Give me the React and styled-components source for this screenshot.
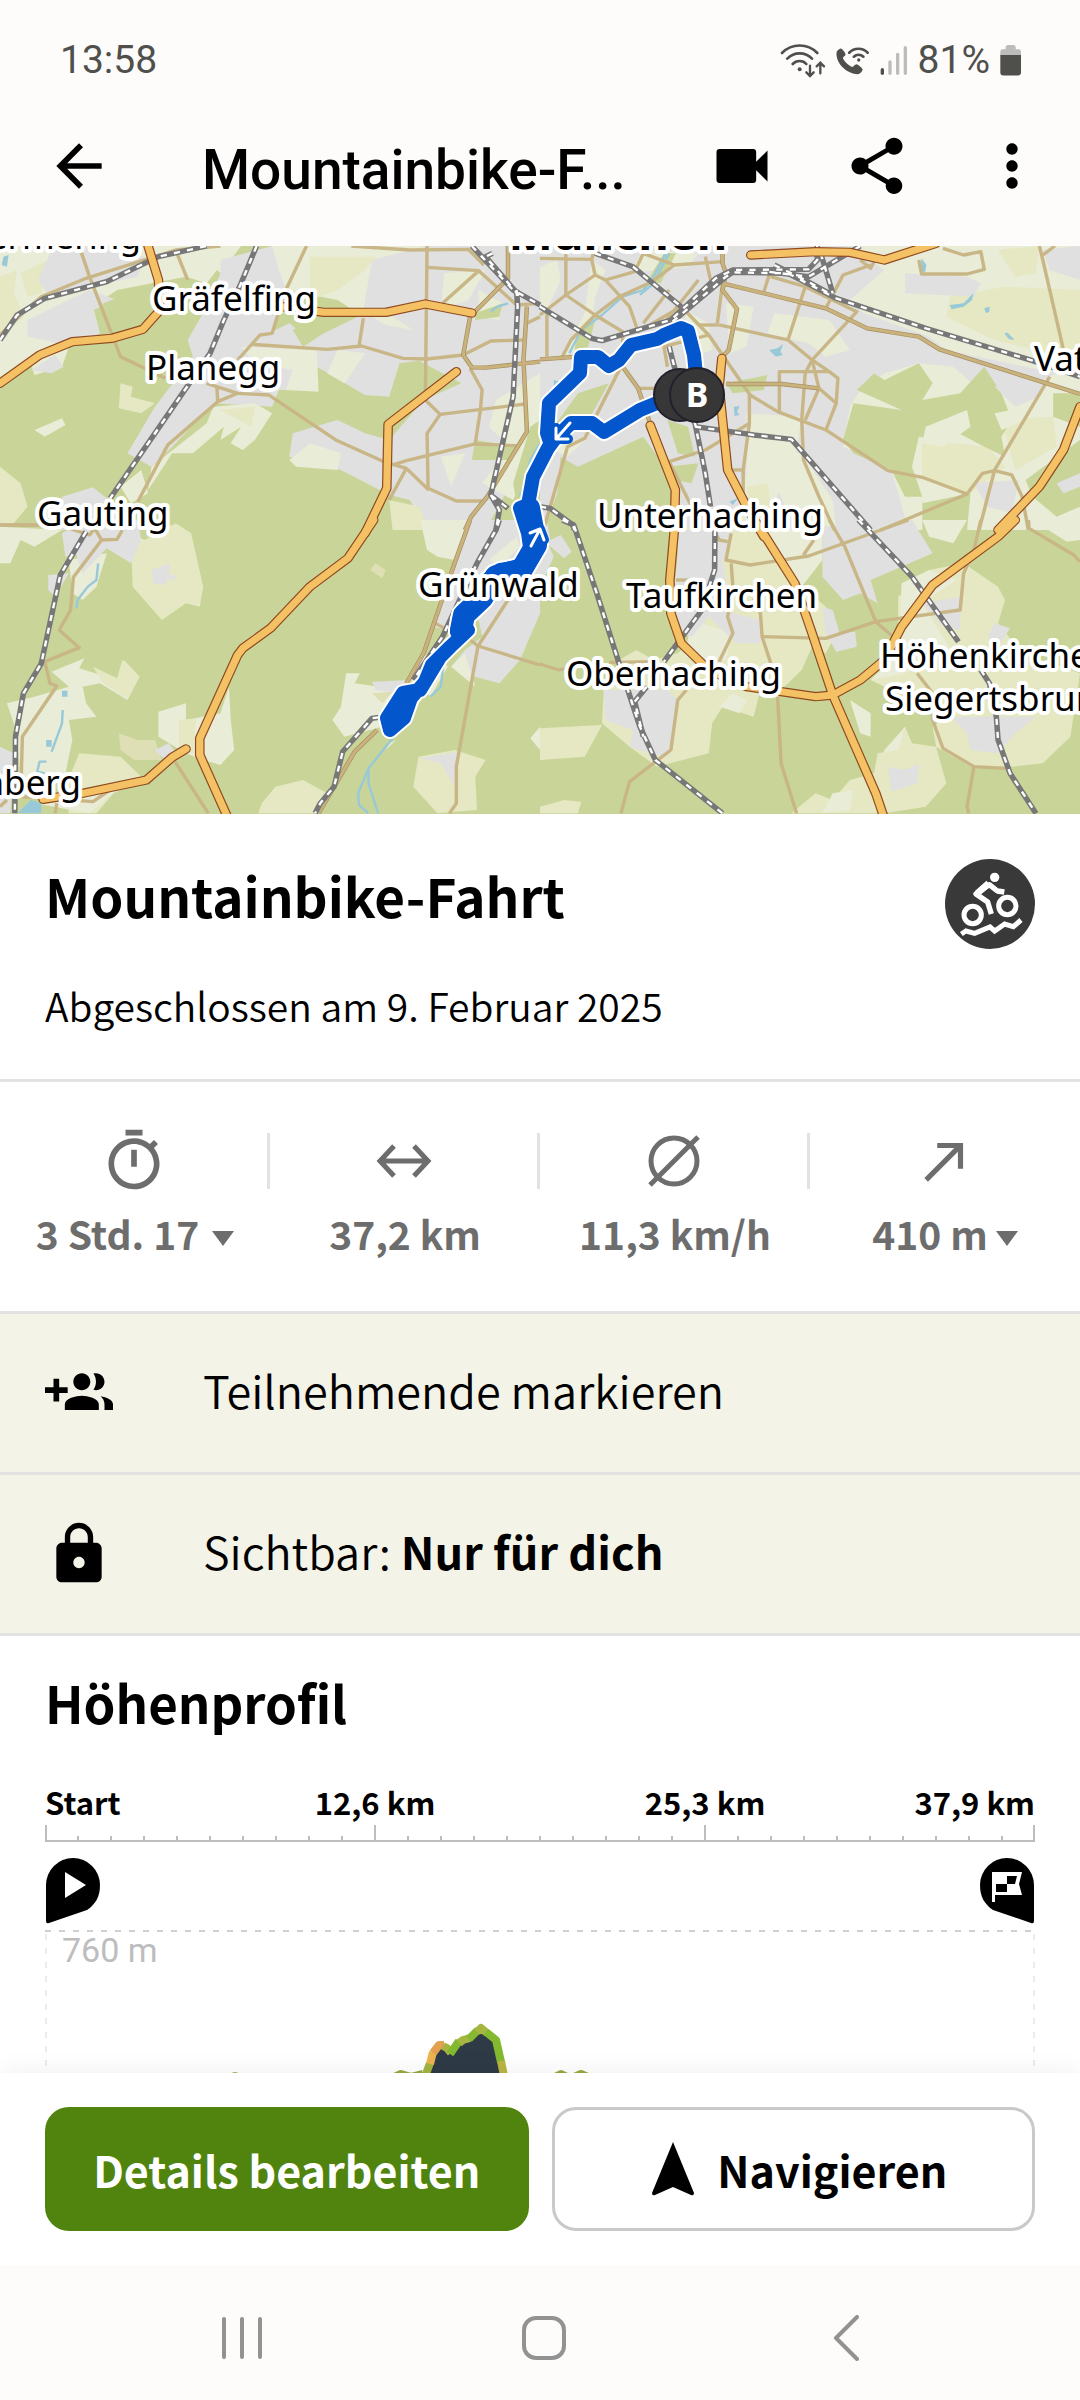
import React from "react";
import styled, { createGlobalStyle } from "styled-components";
import {
  MdArrowBack,
  MdCallMade,
  MdLock,
  MdMoreVert,
  MdOutlineTimer,
  MdShare,
  MdVideocam,
} from "react-icons/md";

const GlobalStyle = createGlobalStyle`
  * {
    box-sizing: border-box;
  }

  body {
    margin: 0;
    background: #ffffff;
    color: #000000;
    font-family: "Noto Sans CJK SC", "Noto Sans", sans-serif;
  }

  button {
    border: 0;
    padding: 0;
    background: none;
    color: inherit;
    font: inherit;
    cursor: pointer;
  }

  h1, h2, p {
    margin: 0;
  }

  svg {
    display: block;
    flex-shrink: 0;
  }
`;

const Screen = styled.div`
  display: flex;
  flex-direction: column;
  height: 100vh;
`;

const StatusBar = styled.div`
  display: flex;
  align-items: center;
  justify-content: space-between;
  height: 86px;
  padding: 34px 58px 0 60px;
  background: #fdfcfa;
  color: #4f4f4c;
  font-family: Roboto, sans-serif;
  font-size: 39px;
  line-height: 52px;
`;

const StatusGroup = styled.div`
  display: flex;
  align-items: center;
  gap: 9px;
`;

const AppBar = styled.header`
  display: flex;
  align-items: center;
  flex-shrink: 0;
  height: 160px;
  padding: 0 34px 0 45px;
  background: #fdfcfa;
`;

const AppTitle = styled.div`
  flex: 1;
  padding: 8px 0 0 89px;
  font-family: Roboto, sans-serif;
  font-size: 55px;
  font-weight: 500;
  line-height: 64px;
  white-space: nowrap;
`;

const AppActions = styled.div`
  display: flex;
  gap: 67px;
`;

const Content = styled.main`
  flex: 1;
  min-height: 0;
  overflow: hidden;
`;

const MapView = styled.svg`
  width: 100%;
  height: 568px;
`;

const Summary = styled.section`
  padding: 45px 45px 50px;
  border-bottom: 3px solid #e2e2e2;
`;

const SummaryHead = styled.div`
  display: flex;
  align-items: flex-start;
  justify-content: space-between;
`;

const Title = styled.h1`
  font-size: 53px;
  font-weight: 700;
  line-height: 72px;
`;

const Subtitle = styled.p`
  margin-top: 32px;
  font-size: 39px;
  font-weight: 350;
  line-height: 48px;
`;

const Stats = styled.section`
  display: grid;
  grid-template-columns: repeat(4, 1fr);
  padding: 51px 0 54px;
  border-bottom: 3px solid #e2e2e2;
  color: #6d6d6d;
`;

const Stat = styled.div`
  display: flex;
  flex-direction: column;
  align-items: center;
  gap: 20px;
`;

const StatIcon = styled.div`
  display: flex;
  align-items: center;
  justify-content: center;
  width: 100%;
  height: 56px;
  border-right: ${(props) => (props.$last ? "0" : "3px solid #e2e2e2")};
`;

const StatValue = styled.div`
  display: flex;
  align-items: center;
  gap: ${(props) => props.$gap || 0}px;
  font-size: 39px;
  font-weight: 700;
  line-height: 48px;
  white-space: nowrap;

  svg {
    margin-top: 10px;
  }
`;

const OptionRow = styled.button`
  display: flex;
  align-items: center;
  gap: 90px;
  width: 100%;
  height: 161px;
  text-align: left;

  && {
    padding: 0 45px;
    border-bottom: 3px solid #e2e2e2;
    background: #f4f3e8;
  }
`;

const OptionLabel = styled.span`
  padding-bottom: 6px;
  font-size: 45px;
  font-weight: 350;
  line-height: 60px;

  strong {
    font-weight: 700;
  }
`;

const Profile = styled.section`
  padding: 34px 45px 0;
`;

const ProfileTitle = styled.h2`
  font-size: 51px;
  font-weight: 700;
  line-height: 64px;
`;

const Scale = styled.div`
  display: grid;
  grid-template-columns: 1fr 2fr 2fr 1fr;
  margin-top: 48px;
  font-size: 31px;
  font-weight: 700;
  line-height: 40px;
  text-align: center;
  white-space: nowrap;

  & > :first-child {
    text-align: left;
  }

  & > :last-child {
    text-align: right;
  }
`;

const Ruler = styled.svg`
  width: 100%;
  height: 17px;
  margin-top: 3px;
`;

const Pins = styled.div`
  display: flex;
  justify-content: space-between;
  margin-top: 16px;
  padding: 0 1px;
`;

const Chart = styled.div`
  position: relative;
  margin-top: 6px;
`;

const ChartLabel = styled.span`
  position: absolute;
  top: 0;
  left: 17px;
  color: #bdbdbd;
  font-family: Roboto, sans-serif;
  font-size: 34px;
  line-height: 40px;
`;

const Actions = styled.footer`
  position: relative;
  display: grid;
  grid-template-columns: 1fr 1fr;
  flex-shrink: 0;
  gap: 23px;
  padding: 34px 45px;
  background: #ffffff;
  box-shadow: 0 -2px 24px rgba(0, 0, 0, 0.06);
`;

const ActionButton = styled.button`
  display: flex;
  align-items: center;
  justify-content: center;
  gap: 22px;
  height: 124px;
  border-radius: 24px;
  font-size: 43px;
  font-weight: 700;
  line-height: 60px;

  && {
    border: ${(props) => (props.$primary ? "0" : "3px solid #c9c9c9")};
    background: ${(props) => (props.$primary ? "#50840e" : "#ffffff")};
    color: ${(props) => (props.$primary ? "#ffffff" : "#000000")};
  }
`;

const SystemNav = styled.nav`
  position: relative;
  display: flex;
  justify-content: center;
  flex-shrink: 0;
  height: 135px;
  padding: 10px 0 0 8px;
  background: #fdfcfa;
`;

const NavButton = styled.button`
  display: flex;
  align-items: center;
  justify-content: center;
  width: 302px;
`;

// Map data is stored in four sheets, each drawn in its own 1568 unit wide grid.
const sheets = [
  {
    x: 0,
    y: 240,
    land: [
      ["light", "M0 18H700L640 100L630 90L600 130L540 110L340 150L270 200L290 280L200 320L180 380L100 405L90 370L0 440Z"],
      ["field", "M0 110L50 90L40 160L70 230L0 290ZM60 100L140 60L120 160L80 170Z"],
      ["urban", "M150 30L240 18L420 50L400 110L260 140L140 165L110 120ZM80 240L260 150L340 180L270 210L290 280L200 320L130 300L80 290Z"],
      ["urban", "M640 60L790 18L880 60L830 180L790 280L690 360L560 350L545 300L600 200L640 100Z"],
      ["light", "M790 18H1568V200L1100 260L980 180L830 150L810 90Z"],
      ["field", "M900 50L1090 50L1060 90L980 150L900 180Z"],
      ["urban", "M560 350L760 290L840 250L900 300L1060 220L1170 270L1230 360L1160 370L1130 470L1060 465L920 380L920 450L810 450L790 500L620 490L500 620L440 680L370 640L450 500Z"],
      ["light", "M700 320L920 330L925 455L830 450L850 390L740 370ZM980 330L1060 340L1000 430L950 400Z"],
      ["urban", "M1080 60L1240 18H1568V650L1500 700L1410 870H1240L1190 780L1130 765L990 690L840 650L850 580L980 540L1060 580L1130 600L1230 480L1340 430L1230 370L1050 240Z"],
      ["light", "M1290 100L1410 90L1360 180L1280 210ZM1080 230L1140 230L1200 270L1120 255ZM1390 150L1460 190L1450 240L1390 230ZM1440 480L1568 400V600L1490 780L1400 730L1480 620L1420 560ZM840 660L900 610L990 640L980 690L860 680ZM1280 650L1350 640L1310 740Z"],
      ["wood", "M1380 220L1460 190L1450 230L1380 240ZM1380 600L1500 620L1480 660L1370 660ZM1540 560L1568 540V640L1500 790L1490 730ZM850 270L910 230L940 280L880 320ZM300 190L400 150L460 220L440 260L330 280L290 220Z"],
      ["light", "M620 500L740 490L790 520L740 600L705 630L670 610L700 560L640 600L650 560L560 640L500 640L430 750L440 680L600 550Z"],
      ["field", "M350 430L385 440L380 470L450 490L410 520L345 505ZM0 680L60 730L80 800L40 850L0 860ZM640 510L740 500L730 560ZM1130 780L1220 800L1240 870H1140Z"],
      ["light", "M100 570L180 535L190 555L130 590ZM440 870L480 850L520 870ZM350 740L410 690L430 760L380 790Z"],
      ["urban", "M180 770L270 742L340 800L330 870H170ZM90 390L160 345L185 380L150 400Z"],
    ],
    water: ["M10 50L25 45L20 80L5 75Z"],
    rivers: ["M1568 610L1540 660L1520 740L1510 770", "M1425 215L1445 200L1475 190"],
    roads: [
      "M0 285L70 215L120 170L250 115L510 30L640 18",
      "M230 18L260 110L350 350L480 415",
      "M510 30L545 120",
      "M890 18L830 150L790 280L755 285L690 360",
      "M730 313L950 328L1050 318L1170 355L1240 357L1345 345L1425 303L1525 300",
      "M1055 235L1043 315",
      "M1240 18L1235 480L1278 523L1525 492",
      "M1240 82L1390 92L1285 190",
      "M1390 92L1500 195L1568 190",
      "M1020 18L1190 30L1360 28L1405 75",
      "M1365 385L1400 450L1395 510L1380 610",
      "M1278 523L1240 580L1243 745L1325 783L1400 783",
      "M1140 675L1180 662L1380 612L1500 617",
      "M1245 750L1180 685L1115 665L975 600L780 465L690 460L600 430",
      "M630 440L632 485L690 460",
      "M632 485L487 615L400 785",
      "M1180 685L1130 780",
      "M0 855H110",
      "M1530 250L1568 230",
    ],
    mainRoads: [
      "M1370 225L1475 115V18",
      "M1365 230L1345 345L1370 382L1410 383L1568 365",
      "M1530 200L1520 360L1530 575L1415 770L1368 830L1350 870",
    ],
    rails: [
      "M745 18L700 130L650 240L610 340L540 445L320 775",
      "M0 300L50 225L130 175L310 125L460 50L600 18",
      "M1370 18L1490 150L1568 195",
      "M1430 40L1410 50L1510 170",
      "M1500 150L1503 200L1490 470L1425 765L1475 805",
      "M1425 765L1450 810L1440 870",
    ],
    motorways: [
      "M430 18L460 120L465 210L415 268L325 295L210 305L115 345L0 430",
      "M820 200L940 217H1120L1235 192L1370 219",
      "M1325 395L1127 553L1123 745L1060 880",
    ],
  },
  {
    x: 540,
    y: 240,
    land: [
      ["light", "M0 18H1568V870H0Z"],
      ["urban", "M0 18H900L1000 90L900 180L940 220L1130 290L1180 330L1500 400L1440 430L1300 470L1200 380L1100 370L1000 400L930 450L900 500L880 620L1020 690L1060 830L1000 870H0Z"],
      ["light", "M0 80L50 60L60 120L20 210L0 200ZM150 60L190 90L160 170L150 260L110 330L60 350L130 220ZM300 30L460 40L430 80L260 100ZM540 190L620 200L600 320L550 340ZM420 210L490 250L500 330L440 350ZM680 220L840 240L900 330L830 350L780 310L660 280ZM600 520L760 530L740 660L640 870H560L600 700ZM640 620L760 640L850 780L860 870H740ZM0 610L130 600L80 650Z"],
      ["field", "M1190 170L1350 140L1568 150V370L1440 330L1320 300L1180 230ZM1110 600L1300 620L1350 680L1250 760L1110 720ZM1340 540L1490 530L1500 620L1380 690ZM1330 30L1450 18L1440 100L1380 110ZM600 740L660 730L680 860H620Z"],
      ["wood", "M60 650L110 680L300 590L370 690L400 800L430 870H10L50 760Z"],
      ["wood", "M920 450L970 400L1000 420L1100 370L1140 430L1110 480L1220 460L1290 380L1340 460L1370 540L1340 590L1350 650L1290 620L1180 560L1160 600L1100 590L1080 680L1110 770L1060 770L1020 690L910 640L880 600L910 490L1050 510Z"],
      ["wood", "M1490 460L1568 460V560L1490 530ZM1410 720L1568 600V800L1500 830L1430 770ZM360 40L395 40L350 130L310 125ZM540 430L660 405L650 450L560 460ZM40 560L110 460L200 430L130 560L50 600ZM370 540L430 560L450 650L400 640ZM370 680L460 670L440 730L390 720ZM1110 790L1250 760L1240 870H1110ZM110 270L160 240L140 320L100 330Z"],
      ["light", "M1120 560L1240 510L1250 560L1170 620L1110 610ZM1320 520L1420 500L1410 540L1340 570Z"],
      ["urban", "M1060 100L1240 110L1280 130L1260 170L1060 160ZM1460 30L1568 18V120L1480 90ZM1260 730L1390 720L1370 820L1300 800ZM1320 440L1480 420L1450 470L1380 500ZM1500 730L1568 700V740L1520 760Z"],
    ],
    water: [
      "M1190 195L1230 190L1258 160L1255 180L1230 200L1195 208Z",
      "M1290 205L1305 200L1305 215L1295 220Z",
      "M1348 280L1358 278L1378 300L1362 298Z",
      "M1108 55L1122 75L1118 98L1106 90Z",
      "M665 330L690 325L706 312L698 335L705 345L685 350Z",
      "M563 500L580 498L572 515L580 525L565 528Z",
      "M40 420L60 425L55 460L40 450Z",
      "M550 785L575 775L560 795Z",
    ],
    rivers: ["M365 40L330 110L300 150L240 170L180 225L120 270L85 340", "M375 40L330 130L290 165"],
    roads: [
      "M0 55L150 58L160 105L75 165V40",
      "M150 58L160 18",
      "M0 225L75 165L160 225L240 275V380",
      "M20 210V350",
      "M160 105L190 120L260 200L285 275L410 200",
      "M190 120L275 95L300 40L390 75L530 65",
      "M390 75L325 125L230 170L160 225L90 300L60 360",
      "M325 125L410 200L490 285L610 465L690 515L830 570L1010 692L1110 712L1240 762L990 870",
      "M520 255L720 300L790 360L840 395L865 415L860 490L830 570",
      "M515 250L530 130L495 120L480 50",
      "M670 110L770 140L920 215L790 360L770 400L760 540L765 660L810 770L855 870",
      "M670 90L650 155",
      "M770 140L720 300",
      "M830 205L880 105L960 75",
      "M695 515V395H840",
      "M770 540L810 445L860 490",
      "M790 360L810 445",
      "M608 465V550L590 690V780",
      "M375 665L480 630L608 550",
      "M375 665L440 800",
      "M375 150L300 250",
      "M545 690H590",
      "M285 445H340",
      "M240 370L130 595L80 620L10 870",
      "M1100 60L1108 102H1240L1290 88L1280 35L1230 45L1170 25",
      "M1450 18L1460 60L1520 330",
      "M1480 410L1320 690L1275 870",
      "M1240 762L1285 700L1320 692L1370 705L1400 770L1418 870",
      "M490 285L360 320L370 380",
      "M460 255H520",
      "M460 120L360 250",
      "M930 60L960 85L975 55",
      "M1460 45L1495 18",
    ],
    mainRoads: [
      "M530 18V70L540 100L530 150L572 207L548 330L530 350",
      "M530 130L830 205L950 265L1100 290L1160 328L1568 462",
      "M240 380L285 445L320 550",
      "M0 358L110 350",
      "M540 432H700L810 445",
    ],
    rails: [
      "M160 40L270 80L410 200",
      "M0 200L150 295L180 302L380 240L510 115L560 90L780 88L805 60V18",
      "M385 245L540 110L560 97L720 100L860 175L1120 265L1430 362L1568 410",
      "M680 75L760 115L840 160",
      "M815 40L850 160",
      "M930 18L780 110L660 95",
      "M375 320L390 380L450 550L480 700L495 800",
      "M450 560L620 585L730 598L960 870",
      "M0 800L30 805L95 855L100 870",
    ],
    motorways: [
      "M612 45L800 35L900 37L1000 60L1150 10",
      "M528 355L520 440L545 690L600 800L650 890",
      "M320 556L393 750L390 870",
      "M1568 500L1520 630L1450 740L1330 870",
    ],
  },
  {
    x: 0,
    y: 520,
    land: [
      ["field", "M380 40L420 60L510 10L555 40L590 200L580 260L540 250L470 300L385 200Z"],
      ["urban", "M440 150L495 130L490 160L520 175L485 180L480 195L445 190Z"],
      ["light", "M0 20L180 30L100 80L60 60L30 130H0ZM200 120L310 100L280 200L240 240L210 220Z"],
      ["urban", "M180 40L250 0H400L410 60L380 130L310 85L240 160L220 100L190 110ZM140 165L200 160L160 230L140 210Z"],
      ["light", "M150 455L245 415L230 445L340 480L360 420L405 470L370 540L290 490L240 500L250 550L280 590L200 600L210 660L190 760L60 800L50 640L20 550L100 530L200 500Z"],
      ["field", "M270 440L340 475L355 420L405 470L370 535L300 490ZM230 700L350 710L420 780L330 820L280 880H200L190 800Z"],
      ["tan", "M345 640L400 660L450 660L470 720L390 720L350 690Z"],
      ["light", "M460 575L540 550V600L640 580L665 500L670 600L680 690L640 735L590 720L540 700L460 650ZM100 850L260 820L340 810L260 880Z"],
      ["field", "M520 600L570 595L560 700L520 690ZM760 850L800 800L880 780L950 820L930 880H750Z"],
      ["urban", "M0 680L40 700L30 880H0ZM450 690L490 670L520 710L480 720Z"],
      ["light", "M1005 460L1045 460L1030 490L1100 500L1170 500L1110 620L1000 650L965 600L990 560Z"],
      ["urban", "M1080 485L1190 480L1160 520L1090 510Z"],
      ["tan", "M1080 520L1140 515L1110 550ZM1075 150L1090 130L1120 150L1110 175Z"],
      ["light", "M1220 0H1360L1320 120L1270 110L1240 90Z"],
      ["urban", "M1355 0H1568V280L1510 420L1450 490L1380 470L1310 440L1350 390L1400 350L1390 300L1300 330L1255 320L1290 200L1320 130Z"],
      ["light", "M1420 120L1500 50L1510 80L1450 140ZM1310 440L1350 400L1380 500ZM1215 420L1290 370L1190 500ZM1285 420L1300 440L1250 530L1240 520Z"],
      ["field", "M1215 710L1320 690L1410 720L1380 770L1385 870L1270 880L1200 800Z"],
      ["urban", "M1220 715L1330 695L1320 800L1280 730Z"],
      ["light", "M1130 670L1150 660L1120 690ZM1540 655L1568 620V690Z"],
    ],
    water: ["M55 875L90 840L120 850V880H55Z", "M180 512H196V530H180ZM134 660H150V680H134Z"],
    rivers: [
      "M1290 410L1280 500L1250 530",
      "M1140 655L1070 745L1040 820L1042 855L1070 880",
      "M1070 745V790L1098 880",
      "M285 130L280 180L255 200L225 240L222 265",
      "M182 570L180 610L150 695",
      "M135 725H115L108 755L130 760",
    ],
    roads: [
      "M0 15H170L260 45L275 25L295 60L340 58L355 30",
      "M295 60L213 172L205 270L172 330L230 383L130 425L145 490L165 498L65 650L60 830L270 845L320 810",
      "M505 720L605 880",
      "M165 850L160 880",
      "M1475 240L1388 378L1568 435",
      "M1365 360L1388 378L1325 740V850L1305 880",
      "M1255 305L1300 330",
      "M0 860L20 840",
    ],
    mainRoads: ["M1365 0L1320 130L1230 400L1180 490", "M1095 630L1030 695L925 880"],
    rails: [
      "M250 35L175 165L120 430L68 520L45 650L43 880",
      "M1450 0L1440 30L1385 130L1330 250L1285 350L1200 480",
      "M1100 592L1080 595L995 695L970 800L930 850L915 880",
    ],
    motorways: [
      "M1085 0L1010 115L900 200L785 325L705 385L690 405L580 655V705L660 890",
      "M540 687L500 712L425 780L240 820L125 838",
    ],
  },
  {
    x: 540,
    y: 520,
    land: [
      ["urban", "M0 0H20L30 60L60 45L92 95L70 115L25 75L40 110L0 200Z"],
      ["field", "M430 20H640L740 180L830 260L860 340L830 400L790 380L760 450L710 500L640 510L620 590L530 560L500 610L490 700L340 740L260 680L180 610L185 510L230 420L280 390L330 420L400 400L480 330L430 280L400 190V40Z"],
      ["light", "M640 30H820V120L760 200L700 110ZM440 300L560 340L540 420L420 410ZM520 560L560 520L600 540L580 580Z"],
      ["urban", "M400 30H560L530 130L560 280L640 300V370H570L490 290L440 350L410 340L385 260L400 100Z"],
      ["urban", "M820 20L1080 0L1140 100L960 180L980 250L930 220L880 240L820 170ZM820 260L850 270L870 340L915 335L920 380L860 395L830 340Z"],
      ["urban", "M185 510H370L400 540L370 710L320 700L260 680L270 630L190 600Z"],
      ["field", "M0 625L180 615L130 710L0 720ZM0 860L70 840L120 845L110 880H0Z"],
      ["light", "M1110 0H1240L1200 70L1130 50ZM1430 0H1568V60L1530 65ZM900 540L960 580V650L930 640Z"],
      ["field", "M1130 150L1230 130L1330 200L1350 240L1330 310L1400 400L1568 460L1540 650L1460 730L1370 740L1250 740L1150 680L1140 620L1180 590L1000 500L960 480L1040 400L1040 230Z"],
      ["light", "M1050 190L1130 150L1210 180L1110 250L1200 400L1060 460L960 480L1040 400ZM1060 620L1080 680L1050 740L980 760L1000 690Z"],
      ["urban", "M1110 250L1220 230V330L1170 320ZM1320 310L1365 325L1330 380L1300 350ZM1190 590H1440L1380 640L1330 700L1250 690L1240 640Z"],
      ["field", "M980 700L1040 690L1060 620L1080 670L1150 680L1180 790L1120 860L1000 880H730L800 820L850 840L900 780L970 760Z"],
      ["light", "M850 820L910 810L900 870L820 880Z"],
      ["urban", "M1010 740L1060 750L1100 730L1095 790L1020 815Z"],
      ["wood", "M860 260L940 230L950 290L870 330Z"],
    ],
    water: [],
    rivers: [],
    roads: [
      "M0 432L55 450L110 440",
      "M200 427L340 425",
      "M425 510L400 540L380 690L260 785L235 880",
      "M520 425L560 340L545 290L560 200L555 130",
      "M555 40L540 120L610 135L780 108L1070 0",
      "M765 105L795 60",
      "M395 180H460",
      "M620 235L640 280L645 350L670 430",
      "M645 350L830 355L975 305L1220 270L1230 160L1260 90L1280 0",
      "M840 0L885 80L975 305L1030 355",
      "M690 530L700 730L745 880",
      "M1095 460L1140 520V600L1170 685L1260 740L1355 745L1375 785L1440 880",
      "M1260 740L1240 860L1245 880",
      "M1418 0L1420 25L1550 105L1568 125",
      "M500 20L520 60L545 65",
    ],
    mainRoads: [],
    rails: [
      "M65 0L98 15L165 220L228 425L290 620L335 720L530 880",
      "M508 30L507 150L470 270L360 425",
      "M310 500L275 545L300 650",
      "M925 0L1080 170L1215 365",
      "M1280 450L1305 490L1325 590L1330 660L1365 760L1440 880",
    ],
    motorways: [
      "M390 -10V30L377 180L380 280L410 370L490 450L600 500L700 515L800 530L850 525L930 480L1000 420L1050 320L1140 195L1330 50L1380 0",
      "M630 10L740 190L790 340L850 525L975 820L998 890",
    ],
  },
];

const landColors = {
  light: "#e9ecd6",
  field: "#e5e8c2",
  tan: "#dfdfb5",
  urban: "#e0e0e0",
  wood: "#c9d598",
};

const places = [
  ["Gräfelfing", 152, 311],
  ["Planegg", 146, 380],
  ["Gauting", 37, 526],
  ["Vaterstetten", 1034, 371],
  ["Unterhaching", 597, 528],
  ["Grünwald", 418, 597],
  ["Taufkirchen", 626, 608],
  ["Oberhaching", 566, 686],
  ["Höhenkirchen-", 880, 668],
  ["Siegertsbrunn", 885, 711],
];

const route =
  "M697 385L694 355L688 331L681 328L664 335L657 339L631 345L619 360L609 366L598 357H581L580 373L549 403L547 433L550 442" +
  "M665 401L657 403L640 410L604 432L592 423H571L554 440L548 448L533 477L528 505L520 508L528 533L530 547L522 567L500 570L487 580" +
  "L482 600L460 617L457 632L468 630L450 647L440 657L420 690L403 693L387 718L390 730L404 718L411 698L425 682L432 665L450 647";

// Stretch that was ridden in both directions.
const doubledRoute = "M529 508L536 545L522 569L496 576L482 598L464 615L461 630";

const SheetLayer = ({ sheet, name, ...rest }) => (
  <g
    transform={`translate(${sheet.x} ${sheet.y}) scale(0.3444 0.3333)`}
    fill="none"
    strokeLinejoin="round"
    {...rest}
  >
    {sheet[name].map((d) => (
      <path key={d} d={d} />
    ))}
  </g>
);

const lineStyles = [
  ["rivers", { stroke: "#98c9d8", strokeWidth: 7 }],
  ["roads", { stroke: "#c9b686", strokeWidth: 10 }],
  ["mainRoads", { stroke: "#a58f63", strokeWidth: 13 }],
  ["mainRoads", { stroke: "#c9b27c", strokeWidth: 9 }],
  ["rails", { stroke: "#777777", strokeWidth: 16 }],
  ["rails", { stroke: "#ffffff", strokeWidth: 7, strokeDasharray: "18 21" }],
  ["motorways", { stroke: "#8f4a20", strokeWidth: 28, strokeLinecap: "round" }],
  ["motorways", { stroke: "#f4c265", strokeWidth: 21, strokeLinecap: "round" }],
];

const RouteMap = () => (
  <MapView viewBox="0 246 1080 568" preserveAspectRatio="xMidYMid slice">
    <rect y="240" width="1080" height="580" fill="#c9d598" />
    {sheets.map((sheet) => (
      <g
        key={`${sheet.x}-${sheet.y}`}
        transform={`translate(${sheet.x} ${sheet.y}) scale(0.3444 0.3333)`}
      >
        {sheet.land.map(([kind, d]) => (
          <path key={d} d={d} fill={landColors[kind]} />
        ))}
        {sheet.water.map((d) => (
          <path key={d} d={d} fill="#98c9d8" />
        ))}
      </g>
    ))}
    {lineStyles.map(([name, style], i) =>
      sheets.map((sheet) => (
        <SheetLayer
          key={`${i}-${sheet.x}-${sheet.y}`}
          sheet={sheet}
          name={name}
          {...style}
        />
      ))
    )}
    <g fill="none" strokeLinejoin="round" strokeLinecap="round">
      <path d={route} stroke="#ffffff" strokeWidth="18" />
      <path d={doubledRoute} stroke="#ffffff" strokeWidth="26" />
      <path d={route} stroke="#0356cb" strokeWidth="14" />
      <path d={doubledRoute} stroke="#0356cb" strokeWidth="22" />
    </g>
    <g fill="none" strokeLinecap="round" strokeLinejoin="round">
      <path d="M570 423L556 439M556 428V439H568" stroke="#0356cb" strokeWidth="10" />
      <path d="M570 423L556 439M556 428V439H568" stroke="#ffffff" strokeWidth="3" />
      <path d="M531 546L540 529M530 533L540 529L544 540" stroke="#0356cb" strokeWidth="10" />
      <path d="M531 546L540 529M530 533L540 529L544 540" stroke="#ffffff" strokeWidth="3" />
    </g>
    <g fill="#373737" stroke="#22202c" strokeWidth="2">
      <circle cx="680" cy="395" r="26" />
      <circle cx="697" cy="395" r="27" />
    </g>
    <g
      fontFamily='"Noto Sans", sans-serif'
      stroke="#ffffff"
      strokeWidth="8"
      strokeLinejoin="round"
      paintOrder="stroke"
    >
      <text x="697" y="407" fontSize="34" fontWeight="700" textAnchor="middle" fill="#ffffff" strokeWidth="0">
        B
      </text>
      <text x="141" y="249" fontSize="35" textAnchor="end">
        Germering
      </text>
      <text x="618" y="250" fontSize="47" fontWeight="700" textAnchor="middle">
        München
      </text>
      <text x="81" y="795" fontSize="35" textAnchor="end">
        Starnberg
      </text>
      {places.map(([name, x, y]) => (
        <text key={name} x={x} y={y} fontSize="35">
          {name}
        </text>
      ))}
    </g>
  </MapView>
);

const WifiIcon = () => (
  <svg width="46" height="36" viewBox="120 66 138 108" fill="none" stroke="currentColor" strokeWidth="8" strokeLinecap="round">
    <path d="M126 99C155 69 203 69 232 99M142 116C162 95 196 95 216 116M158 132C169 120 189 120 199 132" />
    <circle cx="179" cy="148" r="6" fill="currentColor" stroke="none" />
    <path d="M210 137V167M199 157L210 168L221 157M241 160V129M230 139L241 128L252 139" strokeWidth="7" />
  </svg>
);

const CallIcon = () => (
  <svg width="35" height="36" viewBox="272 66 106 108" fill="none" stroke="currentColor" strokeWidth="8" strokeLinecap="round">
    <path
      d="M277 95C280 90 286 85 291 85C295 88 304 98 304 103C304 107 296 110 296 114C299 123 312 136 324 141C328 141 332 133 337 133C342 133 353 143 356 149C354 156 347 163 341 163C309 163 272 130 277 95Z"
      fill="currentColor"
      stroke="none"
    />
    <path d="M315 98C330 82 356 82 371 98M329 110C337 102 350 102 358 110" />
    <circle cx="344" cy="120" r="5" fill="currentColor" stroke="none" />
  </svg>
);

const SignalIcon = () => (
  <svg width="30" height="36" viewBox="404 66 90 108" fill="none" strokeWidth="10" strokeLinecap="round">
    <path d="M414 149V160" stroke="currentColor" />
    <path d="M437 126V160M460 103V160M483 83V160" stroke="#bcbcba" />
  </svg>
);

const BatteryIcon = () => (
  <svg width="23" height="36" viewBox="776 66 70 108">
    <path d="M780 106V95Q780 87 788 87H796V80Q797 74 804 74H819Q826 74 827 80V87H835Q843 87 843 95V106Z" fill="#bcbcba" />
    <path d="M780 105H843V157Q843 167 833 167H790Q780 167 780 157Z" fill="currentColor" />
  </svg>
);

const BikeIcon = () => (
  <svg width="90" height="90" viewBox="45 27 270 270" role="img" aria-label="Mountainbike">
    <circle cx="180" cy="162" r="135" fill="#393939" />
    <circle cx="194" cy="82" r="14" fill="#ffffff" />
    <g fill="none" stroke="#ffffff">
      <circle cx="128" cy="195" r="26" strokeWidth="15" />
      <circle cx="232" cy="168" r="26" strokeWidth="15" />
      <path d="M223 126L202 123L178 104L138 132L173 156L184 192" strokeWidth="16" strokeLinejoin="round" />
      <path d="M142 130L176 100" strokeWidth="20" />
      <path d="M94 252L108 243L134 250L180 231L194 243L224 222L250 230L273 210" strokeWidth="15" />
    </g>
  </svg>
);

const DistanceIcon = () => (
  <svg width="56" height="36" viewBox="0 0 56 36" fill="none" stroke="currentColor" strokeWidth="5">
    <path d="M4 18H52M18 3L4 18L18 33M38 3L52 18L38 33" />
  </svg>
);

const AverageIcon = () => (
  <svg width="52" height="52" viewBox="0 0 52 52" fill="none" stroke="currentColor" strokeWidth="5">
    <circle cx="26" cy="26" r="23" />
    <path d="M2 50L50 2" />
  </svg>
);

const Caret = () => (
  <svg width="22" height="15" viewBox="0 0 22 15" fill="currentColor">
    <path d="M0 0H22L11 15Z" />
  </svg>
);

const GroupAddIcon = () => (
  <svg width="68" height="68" viewBox="0 0 24 24">
    <path d="M8 10H5V7H3v3H0v2h3v3h2v-3h3v-2zm10 1c1.66 0 2.99-1.34 2.99-3S19.66 5 18 5c-.32 0-.63.05-.91.14.57.81.9 1.79.9 2.86s-.34 2.04-.9 2.86c.28.09.59.14.91.14zm-5 0c1.66 0 2.99-1.34 2.99-3S14.66 5 13 5c-1.66 0-3 1.34-3 3s1.34 3 3 3zm6.62 2.16c.83.73 1.38 1.66 1.38 2.84v2h3v-2c0-1.54-2.37-2.49-4.38-2.84zM13 13c-2 0-6 1-6 3v2h12v-2c0-2-4-3-6-3z" />
  </svg>
);

const StartPin = () => (
  <svg width="54" height="66" viewBox="0 0 54 66">
    <path d="M0 27A27 27 0 0 1 54 27C54 38 50 46 41 52L3 65Q0 66 0 63Z" />
    <path d="M19 14L40 27L19 40Z" fill="#ffffff" />
  </svg>
);

const FinishPin = () => (
  <svg width="54" height="66" viewBox="0 0 54 66">
    <path d="M54 27A27 27 0 0 0 0 27C0 38 4 46 13 52L51 65Q54 66 54 63Z" />
    <path d="M12 14H42L39 26L42 37H15V44H12Z" fill="#ffffff" />
    <path d="M27 18H37L35 26H27ZM16 26H27V34H16Z" />
  </svg>
);

const NavigateIcon = () => (
  <svg width="56" height="54" viewBox="-12 0 56 54">
    <path d="M22 0L43 51Q43 54 40 53L22 45L4 53Q1 54 1 51Z" />
  </svg>
);

// Colour follows the steepness of each part of the climb.
const slopes = [
  ["M366 143L372 142L376 143", "#93ab42"],
  ["M376 144L381 138L385 127", "#a3b441"],
  ["M385 128L388 116", "#ebb44e"],
  ["M388 117L394 109L399 109", "#e3a04e"],
  ["M398 110L402 112L406 117", "#a6b441"],
  ["M405 118L414 105", "#83b92f"],
  ["M414 107L418 104L425 102", "#a5b741"],
  ["M424 103L433 94", "#86b832"],
  ["M432 96L436 92L442 97", "#a5b741"],
  ["M441 96L451 104L456 126", "#83b92f"],
  ["M456 125L461 150", "#b8b543"],
];

const ElevationChart = () => (
  <svg width="100%" height="300" viewBox="0 0 990 300" preserveAspectRatio="xMidYMin meet" fill="none">
    <path d="M0 1H990" stroke="#cfcfcf" strokeWidth="2" strokeDasharray="6 8" />
    <path d="M1 4V300M989 4V300" stroke="#d9d9d9" strokeWidth="1" strokeDasharray="6 8" />
    <g strokeWidth="8" strokeLinejoin="round">
      <path d="M184 148L190 146L196 148" stroke="#b0a94c" />
      <path d="M347 148L356 144L366 147L378 144" stroke="#93ab42" />
      <path d="M510 147L516 144L522 147M529 147L536 144L543 147" stroke="#93ab42" />
    </g>
    <g transform="translate(0 6)" strokeWidth="8" strokeLinejoin="round">
      <path
        d="M345 300V148L376 143L388 116L399 109L406 117L418 104L436 91L451 104L461 150V300Z"
        fill="#2e3a46"
      />
      {slopes.map(([d, color]) => (
        <path key={d} d={d} stroke={color} />
      ))}
    </g>
  </svg>
);

const ticks = Array.from({ length: 31 }, (_, i) => i);

const ScaleRuler = () => (
  <Ruler viewBox="0 0 990 17" preserveAspectRatio="none" stroke="#bdbdbd" strokeWidth="2">
    <path d="M0 16H990" />
    {ticks.map((i) => (
      <path key={i} d={`M${Math.min(989, Math.max(1, i * 33))} ${i % 10 ? 11 : 0}V16`} />
    ))}
  </Ruler>
);

const App = () => (
  <Screen>
    <GlobalStyle />
    <StatusBar>
      <span>13:58</span>
      <StatusGroup>
        <WifiIcon />
        <CallIcon />
        <SignalIcon />
        <span>81%</span>
        <BatteryIcon />
      </StatusGroup>
    </StatusBar>

    <AppBar>
      <button aria-label="Zurück">
        <MdArrowBack size={68} />
      </button>
      <AppTitle>Mountainbike-F...</AppTitle>
      <AppActions>
        <button aria-label="Video">
          <MdVideocam size={68} />
        </button>
        <button aria-label="Teilen">
          <MdShare size={68} />
        </button>
        <button aria-label="Mehr">
          <MdMoreVert size={68} />
        </button>
      </AppActions>
    </AppBar>

    <Content>
      <RouteMap />

      <Summary>
        <SummaryHead>
          <Title>Mountainbike-Fahrt</Title>
          <BikeIcon />
        </SummaryHead>
        <Subtitle>Abgeschlossen am 9. Februar 2025</Subtitle>
      </Summary>

      <Stats>
        <Stat>
          <StatIcon>
            <MdOutlineTimer size={68} />
          </StatIcon>
          <StatValue $gap={13}>
            3 Std. 17 <Caret />
          </StatValue>
        </Stat>
        <Stat>
          <StatIcon>
            <DistanceIcon />
          </StatIcon>
          <StatValue>37,2 km</StatValue>
        </Stat>
        <Stat>
          <StatIcon>
            <AverageIcon />
          </StatIcon>
          <StatValue>11,3 km/h</StatValue>
        </Stat>
        <Stat>
          <StatIcon $last>
            <MdCallMade size={62} />
          </StatIcon>
          <StatValue $gap={8}>
            410 m <Caret />
          </StatValue>
        </Stat>
      </Stats>

      <OptionRow>
        <GroupAddIcon />
        <OptionLabel>Teilnehmende markieren</OptionLabel>
      </OptionRow>
      <OptionRow>
        <MdLock size={68} />
        <OptionLabel>
          Sichtbar: <strong>Nur für dich</strong>
        </OptionLabel>
      </OptionRow>

      <Profile>
        <ProfileTitle>Höhenprofil</ProfileTitle>
        <Scale>
          <span>Start</span>
          <span>12,6 km</span>
          <span>25,3 km</span>
          <span>37,9 km</span>
        </Scale>
        <ScaleRuler />
        <Pins>
          <StartPin />
          <FinishPin />
        </Pins>
        <Chart>
          <ElevationChart />
          <ChartLabel>760 m</ChartLabel>
        </Chart>
      </Profile>
    </Content>

    <Actions>
      <ActionButton $primary>Details bearbeiten</ActionButton>
      <ActionButton>
        <NavigateIcon />
        Navigieren
      </ActionButton>
    </Actions>

    <SystemNav>
      <NavButton aria-label="Letzte Apps">
        <svg width="42" height="44" viewBox="0 0 42 44" fill="none" stroke="#929292" strokeWidth="4" strokeLinecap="round">
          <path d="M3 3V41M21 3V41M39 3V41" />
        </svg>
      </NavButton>
      <NavButton aria-label="Startbildschirm">
        <svg width="46" height="46" viewBox="0 0 46 46" fill="none" stroke="#929292" strokeWidth="4">
          <rect x="3" y="3" width="40" height="40" rx="12" />
        </svg>
      </NavButton>
      <NavButton aria-label="Zurück">
        <svg width="28" height="46" viewBox="0 0 28 46" fill="none" stroke="#929292" strokeWidth="4" strokeLinecap="round" strokeLinejoin="round">
          <path d="M25 2L4 23L25 44" />
        </svg>
      </NavButton>
    </SystemNav>
  </Screen>
);

export default App;
